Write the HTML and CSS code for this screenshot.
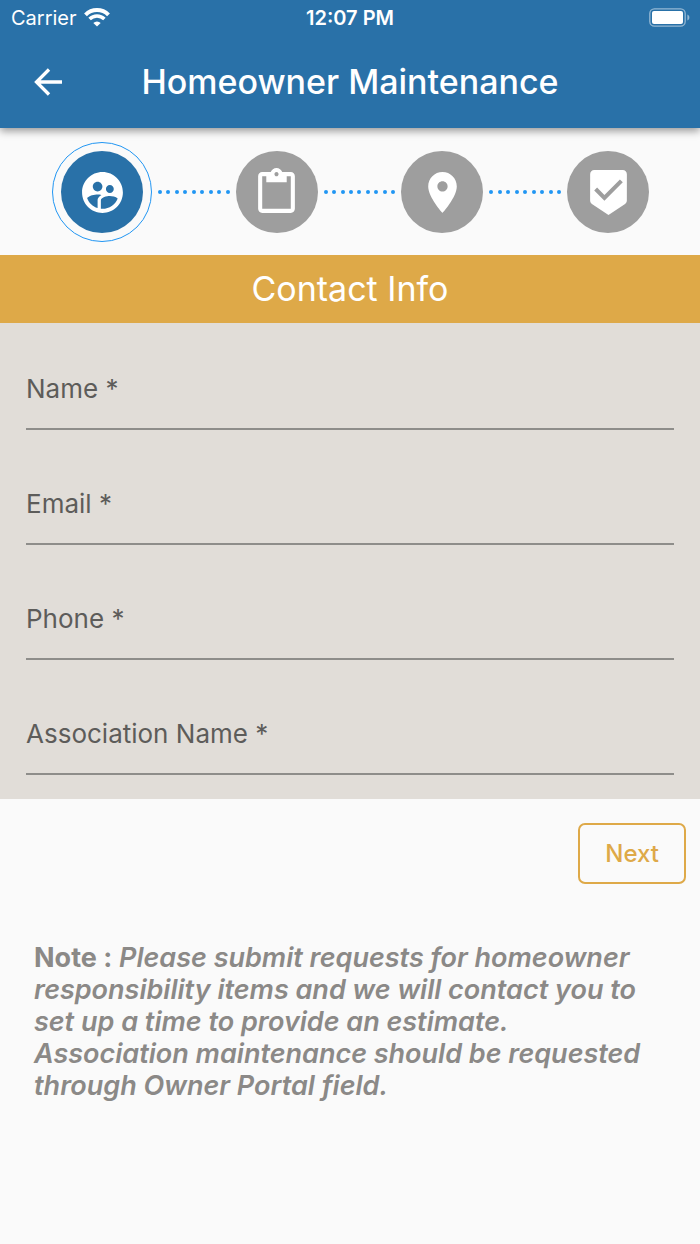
FILE: index.html
```html
<!DOCTYPE html>
<html lang="en">
<head>
<meta charset="utf-8">
<meta name="viewport" content="width=device-width, initial-scale=1">
<title>Homeowner Maintenance</title>
<link rel="stylesheet" href="styles.css">
</head>
<body>
<header class="header">
  <div class="status">
    <div class="carrier">
      <span>Carrier</span>
      <svg class="wifi" viewBox="0 0 26 19" aria-hidden="true">
        <path d="M1.5 6.8a16.3 16.3 0 0 1 23 0" fill="none" stroke="#fff" stroke-width="4"/>
        <path d="M5.6 11a10.5 10.5 0 0 1 14.8 0" fill="none" stroke="#fff" stroke-width="3.5"/>
        <path d="M13 18.6l-3.7-3.7a5.3 5.3 0 0 1 7.4 0z" fill="#fff"/>
      </svg>
    </div>
    <time class="clock">12:07 PM</time>
    <svg class="battery" viewBox="0 0 41 19" aria-hidden="true">
      <rect x="0.8" y="0.8" width="35.4" height="17.4" rx="4.6" fill="none" stroke="#fff" stroke-opacity=".5" stroke-width="1.3"/>
      <rect x="3" y="3" width="31" height="13" rx="2" fill="#fff"/>
      <path d="M38.4 6.5c2.6 1 2.6 5 0 6z" fill="#fff" fill-opacity=".5"/>
    </svg>
  </div>
  <div class="bar">
    <button class="back" type="button" aria-label="Back">
      <svg viewBox="0 0 28 28" aria-hidden="true"><path d="M15 1.5L2.5 14 15 26.5M2.5 14H28" fill="none" stroke="#fff" stroke-width="3.3"/></svg>
    </button>
    <h1 class="title">Homeowner Maintenance</h1>
  </div>
</header>
<main>
  <nav class="steps" aria-label="Progress">
    <span class="ring"><button class="step step-active" type="button" aria-label="Contact info" aria-current="step">
      <svg viewBox="0 0 24 24"><path d="M11.99 2c-5.52 0-10 4.48-10 10s4.48 10 10 10 10-4.48 10-10-4.48-10-10-10zm3.61 6.34c1.07 0 1.93.86 1.93 1.93 0 1.07-.86 1.93-1.93 1.93-1.07 0-1.93-.86-1.93-1.93-.01-1.07.86-1.93 1.93-1.93zm-6-1.58c1.3 0 2.36 1.06 2.36 2.36 0 1.3-1.06 2.36-2.36 2.36s-2.36-1.06-2.36-2.36c0-1.31 1.05-2.36 2.36-2.36zm0 9.13v3.75c-2.4-.75-4.3-2.6-5.14-4.96 1.05-1.12 3.67-1.69 5.14-1.69.53 0 1.2.08 1.9.22-1.64.87-1.9 2.02-1.9 2.68zM11.99 20c-.27 0-.53-.01-.79-.04v-4.07c0-1.42 2.94-2.13 4.4-2.13 1.07 0 2.92.39 3.84 1.15-1.17 2.97-4.06 5.09-7.45 5.09z"/></svg>
    </button></span>
    <span class="dots"><i></i><i></i><i></i><i></i><i></i><i></i><i></i><i></i><i></i></span>
    <button class="step" type="button" aria-label="Request details">
      <svg viewBox="0 0 24 24"><path d="M19 2h-4.18C14.4.84 13.3 0 12 0c-1.3 0-2.4.84-2.82 2H5c-1.1 0-2 .9-2 2v16c0 1.1.9 2 2 2h14c1.1 0 2-.9 2-2V4c0-1.1-.9-2-2-2zm-7 0c.55 0 1 .45 1 1s-.45 1-1 1-1-.45-1-1 .45-1 1-1zm7 18H5V4h2v3h10V4h2v16z"/></svg>
    </button>
    <span class="dots"><i></i><i></i><i></i><i></i><i></i><i></i><i></i><i></i><i></i></span>
    <button class="step" type="button" aria-label="Location">
      <svg viewBox="0 0 24 24"><path d="M12 2C8.13 2 5 5.13 5 9c0 5.25 7 13 7 13s7-7.75 7-13c0-3.87-3.13-7-7-7zm0 9.5c-1.38 0-2.5-1.12-2.5-2.5s1.12-2.5 2.5-2.5 2.5 1.12 2.5 2.5-1.12 2.5-2.5 2.5z"/></svg>
    </button>
    <span class="dots"><i></i><i></i><i></i><i></i><i></i><i></i><i></i><i></i><i></i></span>
    <button class="step" type="button" aria-label="Confirm">
      <svg viewBox="0 0 24 24"><path d="M19 1H5c-1.1 0-1.99.9-1.99 2L3 15.93c0 .69.35 1.3.88 1.66L12 23l8.11-5.41c.53-.36.88-.97.88-1.66L21 3c0-1.1-.9-2-2-2zm-9 15l-5-5 1.41-1.41L10 13.17l7.59-7.59L19 7l-9 9z"/></svg>
    </button>
  </nav>
  <h2 class="section">Contact Info</h2>
  <form id="contact" class="form">
    <div class="field"><label for="name">Name *</label><input id="name" type="text" required></div>
    <div class="field"><label for="email">Email *</label><input id="email" type="email" required></div>
    <div class="field"><label for="phone">Phone *</label><input id="phone" type="tel" required></div>
    <div class="field"><label for="association">Association Name *</label><input id="association" type="text" required></div>
  </form>
  <div class="actions"><button class="next" type="submit" form="contact">Next</button></div>
  <p class="note"><strong>Note :</strong> <em>Please submit requests for homeowner responsibility items and we will contact you to set up a time to provide an estimate. Association maintenance should be requested through Owner Portal field.</em></p>
</main>
</body>
</html>
```
FILE: styles.css
```css
* { box-sizing: border-box; }

body {
  margin: 0;
  background: #fafafa;
  font-family: Inter, "Liberation Sans", sans-serif;
}

button { font-family: inherit; cursor: pointer; }
svg { display: block; }

.header {
  position: relative;
  background: #2971a8;
  color: #fff;
  box-shadow: 0 3px 8px rgba(0, 0, 0, 0.4);
}

.status {
  display: grid;
  grid-template-columns: 1fr auto 1fr;
  align-items: center;
  height: 35px;
  padding: 0 10px;
  font-size: 20px;
}

.carrier { display: flex; align-items: center; gap: 7px; padding-left: 1px; }
.wifi { width: 26px; height: 19px; }
.clock { font-weight: 600; }
.battery { width: 41px; height: 19px; justify-self: end; }

.bar {
  display: grid;
  grid-template-columns: 64px 1fr 64px;
  align-items: center;
  height: 93px;
}

.back {
  justify-self: end;
  padding: 0 2px;
  border: 0;
  background: none;
}

.back svg { width: 28px; height: 28px; }

.title {
  margin: 0;
  font-size: 34px;
  font-weight: 500;
  line-height: 40px;
  text-align: center;
}

.steps {
  display: flex;
  align-items: center;
  padding: 14px 51px 13px 52px;
}

.ring {
  padding: 8px;
  border: 1px solid #2196f3;
  border-radius: 50%;
}

.step {
  display: flex;
  align-items: center;
  justify-content: center;
  flex: none;
  width: 82px;
  height: 82px;
  padding: 0;
  border: 0;
  border-radius: 50%;
  background: #9e9e9e;
}

.step-active { background: #2971a8; }
.step svg { width: 49px; height: 49px; fill: #fff; }

.dots {
  display: flex;
  flex: 1;
  justify-content: space-between;
  padding: 0 6px;
}

.dots i {
  width: 4px;
  height: 4px;
  border-radius: 50%;
  background: #2196f3;
}

.section {
  margin: 0;
  padding: 14px;
  background: #dea948;
  color: #fff;
  font-size: 34px;
  font-weight: 400;
  line-height: 40px;
  text-align: center;
}

.form {
  display: grid;
  gap: 33px;
  padding: 25px 26px 24px;
  background: #e1ddd8;
}

.field { display: grid; }

.field label,
.field input {
  grid-area: 1 / 1;
  height: 82px;
  font-size: 26px;
  line-height: 82px;
}

.field label { color: #5d5c5a; }

.field input {
  width: 100%;
  padding: 0;
  border: 0;
  border-bottom: 2px solid #8e8d8a;
  border-radius: 0;
  outline: 0;
  background: none;
  font-family: inherit;
}

.actions {
  display: flex;
  justify-content: flex-end;
  padding: 24px 14px;
}

.next {
  padding: 14px 25px;
  border: 2px solid #dea948;
  border-radius: 7px;
  background: transparent;
  color: #dea948;
  font-size: 24px;
  font-weight: 500;
  line-height: 29px;
}

.note {
  margin: 0;
  padding: 34px;
  color: #8b8987;
  font-size: 27px;
  font-weight: 600;
  line-height: 32px;
}

.note strong { font-weight: 700; }
```
